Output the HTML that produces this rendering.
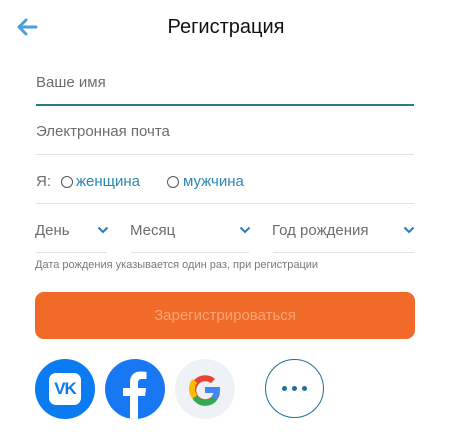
<!DOCTYPE html><html><head><meta charset="utf-8"><style>
body{margin:0;width:455px;height:442px;background:#fff;font-family:"Liberation Sans",sans-serif;position:relative;overflow:hidden}
.a{position:absolute}
.ph{color:#6d6d6d;font-size:15px}
.line{position:absolute;height:1px;background:#e3e3e3}
.c{position:absolute;width:60px;height:60px;border-radius:50%;top:359px}
</style></head><body>
<svg class="a" style="left:16px;top:17px" width="22" height="20" viewBox="0 0 22 20"><path d="M20 10H3M10 3L3 10l7 7" fill="none" stroke="#4a9fd6" stroke-width="3" stroke-linecap="round" stroke-linejoin="round"/></svg>
<div class="a" style="left:0;width:452px;top:16px;text-align:center;font-size:20px;color:#111">Регистрация</div>
<div class="a ph" style="left:36px;top:74px">Ваше имя</div>
<div class="a" style="left:36px;top:104px;width:378px;height:2px;background:#2b7a8c"></div>
<div class="a ph" style="left:36px;top:123px">Электронная почта</div>
<div class="line" style="left:36px;top:154px;width:378px"></div>
<div class="a" style="left:36px;top:173px;font-size:15px;color:#6d6d6d">Я:</div>
<div class="a" style="left:61px;top:176px;width:10px;height:10px;border:1.3px solid #555;border-radius:50%"></div>
<div class="a" style="left:76px;top:173px;font-size:15px;color:#2a88b0">женщина</div>
<div class="a" style="left:167px;top:176px;width:10px;height:10px;border:1.3px solid #555;border-radius:50%"></div>
<div class="a" style="left:183px;top:173px;font-size:15px;color:#2a88b0">мужчина</div>
<div class="line" style="left:36px;top:203px;width:378px"></div>
<div class="a ph" style="left:35px;top:222px">День</div>
<div class="a ph" style="left:130px;top:222px">Месяц</div>
<div class="a ph" style="left:272px;top:222px">Год рождения</div>
<svg class="a" style="left:97px;top:226px" width="12" height="8"><path d="M1.5 1.5l4.5 4.5 4.5-4.5" fill="none" stroke="#2b7fae" stroke-width="2"/></svg>
<svg class="a" style="left:239px;top:226px" width="12" height="8"><path d="M1.5 1.5l4.5 4.5 4.5-4.5" fill="none" stroke="#2b7fae" stroke-width="2"/></svg>
<svg class="a" style="left:403px;top:226px" width="12" height="8"><path d="M1.5 1.5l4.5 4.5 4.5-4.5" fill="none" stroke="#2b7fae" stroke-width="2"/></svg>
<div class="line" style="left:36px;top:252px;width:71px"></div>
<div class="line" style="left:131px;top:252px;width:118px"></div>
<div class="line" style="left:273px;top:252px;width:141px"></div>
<div class="a" style="left:35px;top:259px;font-size:11px;color:#7a7a7a">Дата рождения указывается один раз, при регистрации</div>
<div class="a" style="left:35px;top:292px;width:380px;height:47px;border-radius:9px;background:#f26a27;color:#f7a57c;font-size:15px;text-align:center;line-height:47px">Зарегистрироваться</div>
<div class="c" style="left:35px;background:#0a7bf0"><div class="a" style="left:14px;top:14px;width:32px;height:32px;border-radius:7px;background:#fff;color:#0a7bf0;font-weight:bold;font-size:17px;line-height:32px;text-align:center;letter-spacing:-1px">VK</div></div>
<div class="c" style="left:105px;background:#1877f2;overflow:hidden"><svg width="60" height="60"><path d="M33 60V37h7l1-8h-8v-5c0-2.5 1-4 4-4h4.5v-7c-1-.2-3.5-.5-6-.5-6.5 0-10.5 4-10.5 10.5V29h-7v8h7v23z" fill="#fff"/></svg></div>
<div class="c" style="left:175px;background:#eef2f6"><svg width="60" height="60" viewBox="0 0 60 60"><g fill="none" stroke-width="6"><path d="M38 22a12 12 0 1 0 4 12" stroke="#ea4335"/><path d="M20 22a12 12 0 0 0 0 16" stroke="#fbbc05"/><path d="M20 38a12 12 0 0 0 20 1" stroke="#34a853"/><path d="M30 31h12a12 12 0 0 1-3 8" stroke="#4285f4"/></g></svg></div>
<div class="c" style="left:265px;width:57px;height:57px;border:1.5px solid #1f6f95"><div class="a" style="left:16px;top:26px;width:5px;height:5px;border-radius:50%;background:#1f6f95;box-shadow:10px 0 #1f6f95,20px 0 #1f6f95"></div></div>
</body></html>
